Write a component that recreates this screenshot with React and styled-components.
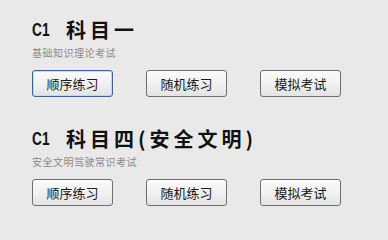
import React from "react";
import styled, { createGlobalStyle, css } from "styled-components";

const GlobalStyle = createGlobalStyle`
  html, body {
    margin: 0;
    padding: 0;
    background: #e9e9e9;
  }
  body {
    font-family: "Noto Sans CJK SC", "Noto Sans", sans-serif;
  }
`;

const Page = styled.div`
  width: 388px;
  height: 236px;
  box-sizing: border-box;
  padding: 18px 0 0 32px;
  display: flex;
  flex-direction: column;
  gap: 30px;
  background: #e9e9e9;
`;

const Section = styled.div`
  display: flex;
  flex-direction: column;
`;

const Title = styled.h2`
  margin: 0;
  height: 24px;
  line-height: 24px;
  font-size: 20px;
  font-weight: 700;
  color: #111;
  letter-spacing: 4px;
  white-space: nowrap;
  display: flex;
  align-items: center;
`;

const Code = styled.span`
  display: inline-block;
  width: 16px;
  margin-right: 18px;
  font-family: "Liberation Sans", sans-serif;
  font-size: 19px;
  letter-spacing: 0;
  transform: scaleX(0.72);
  transform-origin: left center;
`;

const Sub = styled.div`
  margin-top: 5px;
  height: 12px;
  line-height: 12px;
  font-size: 10px;
  letter-spacing: 0.5px;
  color: #8a8a8a;
`;

const ButtonRow = styled.div`
  margin-top: 11px;
  display: flex;
  gap: 33px;
`;

const Button = styled.button`
  width: 81px;
  height: 27px;
  box-sizing: border-box;
  border: 1px solid #707070;
  border-radius: 3px;
  background: linear-gradient(#fbfbfb, #f1f1f1 50%, #e3e3e3);
  font-family: "Noto Sans CJK SC", sans-serif;
  font-size: 13px;
  color: #1a1a1a;
  padding: 0;
  ${(p) =>
    p.$focused &&
    css`
      border-color: #3c6398;
      box-shadow: inset 0 0 0 1px #b9dcf3;
    `}
`;

const sections = [
  { code: "C1", name: "科目一", sub: "基础知识理论考试", focused: true },
  { code: "C1", name: "科目四(安全文明)", sub: "安全文明驾驶常识考试" },
];

const actions = ["顺序练习", "随机练习", "模拟考试"];

export default function App() {
  return (
    <Page>
      <GlobalStyle />
      {sections.map((s) => (
        <Section key={s.name}>
          <Title>
            <Code>{s.code}</Code>
            {s.name}
          </Title>
          <Sub>{s.sub}</Sub>
          <ButtonRow>
            {actions.map((a, i) => (
              <Button key={a} $focused={s.focused && i === 0}>
                {a}
              </Button>
            ))}
          </ButtonRow>
        </Section>
      ))}
    </Page>
  );
}
